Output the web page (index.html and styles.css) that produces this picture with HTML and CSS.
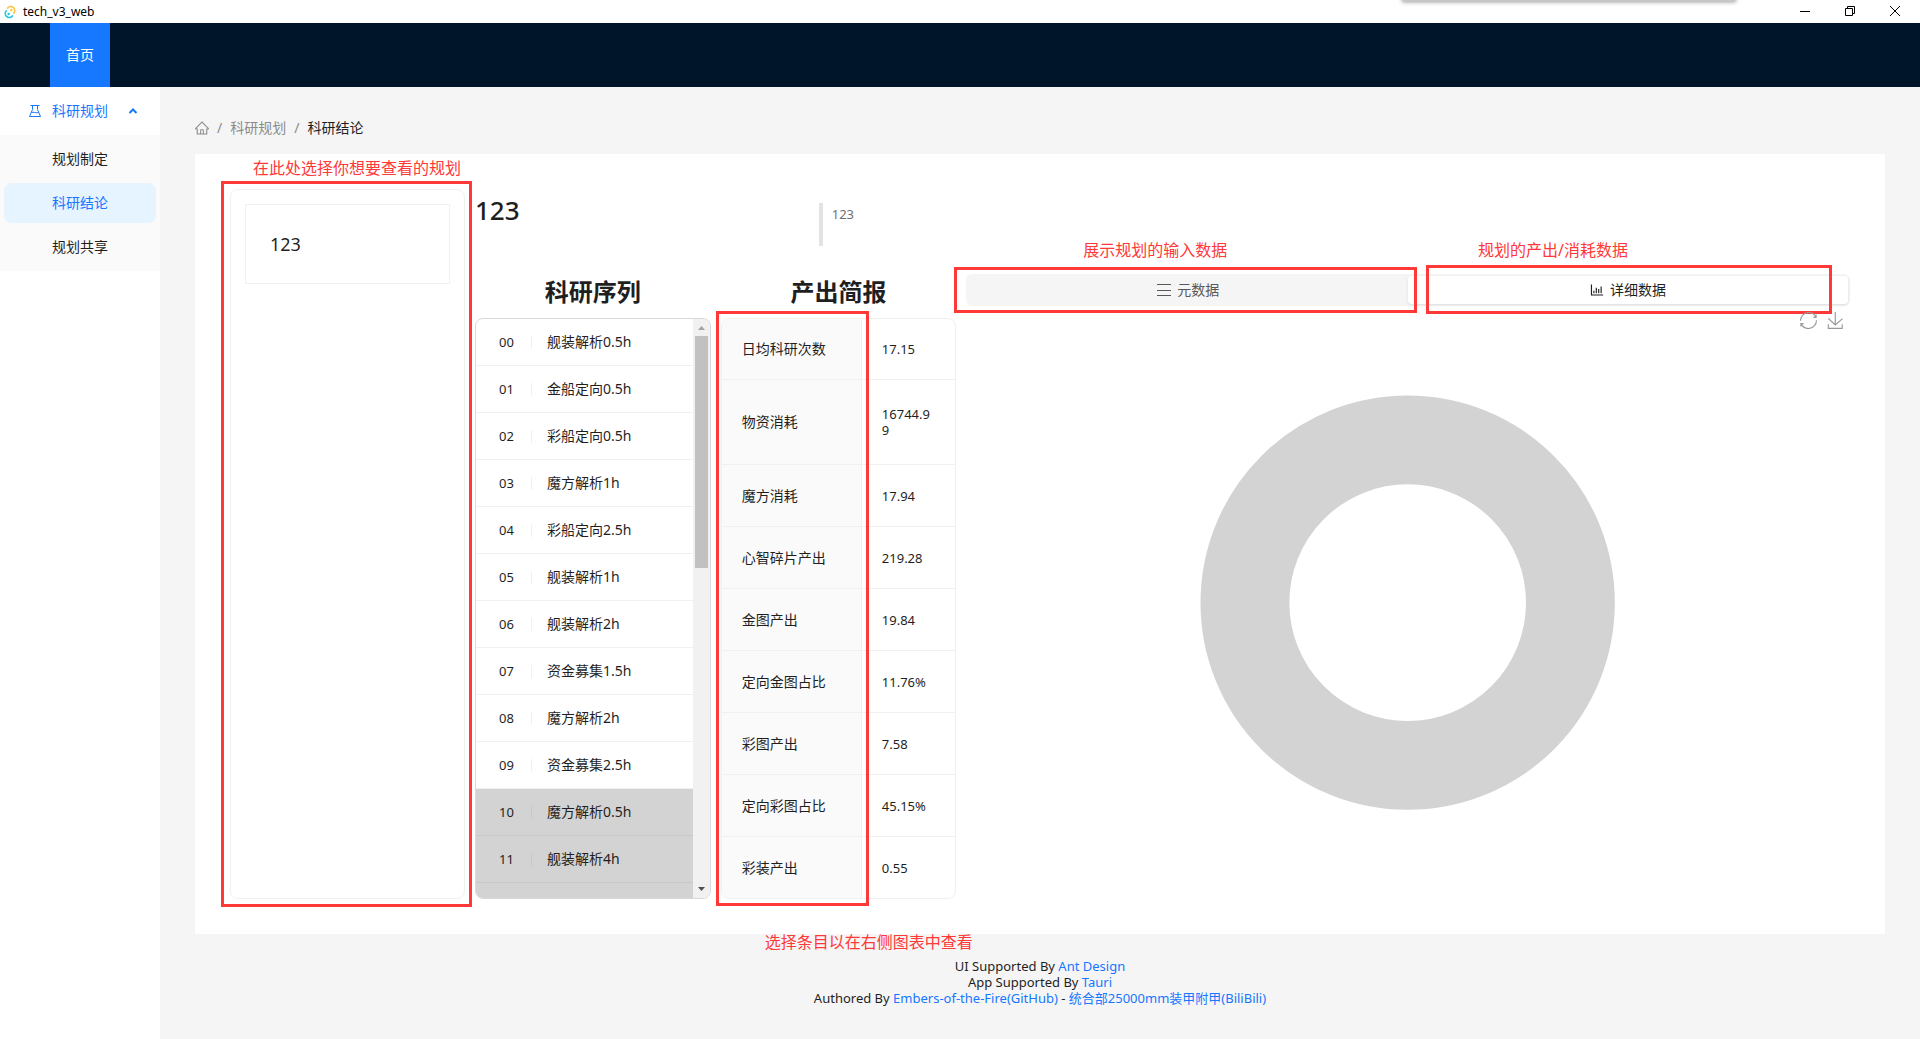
FILE: index.html
```html
<!DOCTYPE html>
<html lang="zh-CN">
<head>
<meta charset="utf-8">
<title>tech_v3_web</title>
<link rel="stylesheet" href="styles.css">
</head>
<body>
<div class="titlebar">
  <svg class="app-icon" viewBox="0 0 14 14" fill="none" stroke-width="1.600">
    <path d="M4.200 3.700A4 4 0 1 1 10.300 8.600" stroke="#fbc43c"/>
    <path d="M9.800 10.300A4 4 0 1 1 3.700 5.400" stroke="#24c8db"/>
    <circle cx="8.300" cy="5" r="1.200" fill="#fbc43c"/>
    <circle cx="5.700" cy="9" r="1.200" fill="#24c8db"/>
  </svg>
  <span class="app-name">tech_v3_web</span>
  <span class="tab-shadow"></span>
  <div class="window-buttons">
    <button type="button" aria-label="最小化"><svg viewBox="0 0 10 10"><path d="M0 5.500h10"/></svg></button>
    <button type="button" aria-label="还原"><svg viewBox="0 0 10 10"><path d="M.5 2.500h7v7h-7zM2.500 2.500v-2h7v7h-2"/></svg></button>
    <button type="button" aria-label="关闭"><svg viewBox="0 0 10 10"><path d="M0 0l10 10M10 0L0 10"/></svg></button>
  </div>
</div>
<header class="header"><a class="header-tab" href="#">首页</a></header>
<div class="layout">
  <nav class="sider">
    <a class="menu-title" href="#">
      <svg class="icon" viewBox="0 0 14 14" fill="none" stroke="currentColor"><path d="M2.500 1.500h9M4.500 1.500v4L1.500 12.500h11L9.500 5.500v-4M3.500 8.500c2-1 4 1 7 0"/></svg>
      <span>科研规划</span>
      <svg class="caret" viewBox="0 0 10 10" fill="none" stroke="currentColor" stroke-width="2"><path d="M1.500 7L5 3.500 8.500 7"/></svg>
    </a>
    <div class="submenu">
      <a href="#">规划制定</a>
      <a href="#" class="selected">科研结论</a>
      <a href="#">规划共享</a>
    </div>
  </nav>
  <div class="main">
    <div class="breadcrumb">
      <a href="#" aria-label="首页"><svg class="icon" viewBox="56 56 912 912" fill="currentColor"><path d="M946.500 505L560.100 118.800l-25.900-25.900a31.500 31.500 0 00-44.400 0L77.500 505a63.900 63.900 0 00-18.800 46c.4 35.200 29.700 63.300 64.900 63.300h42.500V940h691.800V614.300h43.400c17.100 0 33.200-6.700 45.300-18.800a63.600 63.600 0 0018.700-45.300c0-17-6.700-33.100-18.800-45.200zM568 868H456V664h112v204zm217.900-325.700V868H632V640c0-22.100-17.900-40-40-40H432c-22.100 0-40 17.900-40 40v228H238.100V542.300h-96l370-369.700 23.100 23.100L882 542.300h-96.100z"/></svg></a>
      <span>/</span><a href="#">科研规划</a><span>/</span><span class="current">科研结论</span>
    </div>
    <main class="content">
      <section class="plans">
        <button type="button" class="plan">123</button>
        <div class="mark mark-plans"></div>
        <p class="note note-plans">在此处选择你想要查看的规划</p>
      </section>
      <section class="detail">
        <div class="detail-head">
          <h2>123</h2>
          <blockquote>123</blockquote>
        </div>
        <div class="detail-body">
          <div class="column">
            <h3>科研序列</h3>
            <div class="sequence">
              <ul>
                <li><span>00</span><span>舰装解析0.5h</span></li>
                <li><span>01</span><span>金船定向0.5h</span></li>
                <li><span>02</span><span>彩船定向0.5h</span></li>
                <li><span>03</span><span>魔方解析1h</span></li>
                <li><span>04</span><span>彩船定向2.5h</span></li>
                <li><span>05</span><span>舰装解析1h</span></li>
                <li><span>06</span><span>舰装解析2h</span></li>
                <li><span>07</span><span>资金募集1.5h</span></li>
                <li><span>08</span><span>魔方解析2h</span></li>
                <li><span>09</span><span>资金募集2.5h</span></li>
                <li class="off"><span>10</span><span>魔方解析0.5h</span></li>
                <li class="off"><span>11</span><span>舰装解析4h</span></li>
                <li class="rest off"></li>
              </ul>
              <div class="scrollbar">
                <svg viewBox="0 0 9 5"><path d="M0 5L4.500 0 9 5z" fill="#a3a3a3"/></svg>
                <span class="thumb"></span>
                <svg viewBox="0 0 9 5"><path d="M0 0L4.500 5 9 0z" fill="#505050"/></svg>
              </div>
            </div>
          </div>
          <div class="column">
            <h3>产出简报</h3>
            <div class="report">
              <table>
                <tr><th scope="row">日均科研次数</th><td>17.15</td></tr>
                <tr class="tall"><th scope="row">物资消耗</th><td>16744.99</td></tr>
                <tr><th scope="row">魔方消耗</th><td>17.94</td></tr>
                <tr><th scope="row">心智碎片产出</th><td>219.28</td></tr>
                <tr><th scope="row">金图产出</th><td>19.84</td></tr>
                <tr><th scope="row">定向金图占比</th><td>11.76%</td></tr>
                <tr><th scope="row">彩图产出</th><td>7.58</td></tr>
                <tr><th scope="row">定向彩图占比</th><td>45.15%</td></tr>
                <tr><th scope="row">彩装产出</th><td>0.55</td></tr>
              </table>
              <div class="mark mark-report"></div>
              <p class="note note-report">选择条目以在右侧图表中查看</p>
            </div>
          </div>
          <div class="charts">
            <div class="segmented">
              <label><input type="radio" name="view"><svg class="icon" viewBox="0 0 14 14" fill="none" stroke="currentColor"><path d="M0 1.500h14M0 7.500h14M0 12.500h14"/></svg>元数据</label>
              <label><input type="radio" name="view" checked><svg class="icon" viewBox="72 72 880 880" fill="currentColor"><path d="M888 792H200V168c0-4.400-3.600-8-8-8h-56c-4.400 0-8 3.600-8 8v688c0 4.400 3.600 8 8 8h752c4.400 0 8-3.600 8-8v-56c0-4.400-3.600-8-8-8zm-600-80h56c4.400 0 8-3.600 8-8V560c0-4.400-3.600-8-8-8h-56c-4.400 0-8 3.600-8 8v144c0 4.400 3.600 8 8 8zm152 0h56c4.400 0 8-3.600 8-8V384c0-4.400-3.600-8-8-8h-56c-4.400 0-8 3.600-8 8v320c0 4.400 3.600 8 8 8zm152 0h56c4.400 0 8-3.600 8-8V462c0-4.400-3.600-8-8-8h-56c-4.400 0-8 3.600-8 8v242c0 4.400 3.600 8 8 8zm152 0h56c4.400 0 8-3.600 8-8V304c0-4.400-3.600-8-8-8h-56c-4.400 0-8 3.600-8 8v400c0 4.400 3.600 8 8 8z"/></svg>详细数据</label>
              <div class="mark mark-meta"></div>
              <p class="note note-meta">展示规划的输入数据</p>
              <div class="mark mark-data"></div>
              <p class="note note-data">规划的产出/消耗数据</p>
            </div>
            <div class="chart">
              <svg class="donut" viewBox="0 0 416 416"><circle cx="208" cy="208" r="163" fill="none" stroke="#d3d3d3" stroke-width="89"/></svg>
              <div class="toolbox">
                <button type="button" aria-label="还原"><svg viewBox="0 0 60 60"><path d="M47 18.900h9.800V8.700M56.300 20.100C52.100 9 40.500.6 26.800 2.100 12.600 3.700 1.600 16.200 2.100 30.600M13 41.100H3.100v10.200M3.700 39.900c4.200 11.100 15.800 19.500 29.500 18 14.200-1.600 25.200-14.100 24.700-28.500"/></svg></button>
                <button type="button" aria-label="保存为图片"><svg viewBox="0 0 60 60"><path d="M4.700 22.900l24.600 22.600 25.400-22.100M4.600 43.600V58h49.200V43.600M29.200 45.100V0"/></svg></button>
              </div>
            </div>
          </div>
        </div>
      </section>
    </main>
    <footer class="footer">
      <div>UI Supported By <a href="#">Ant Design</a></div>
      <div>App Supported By <a href="#">Tauri</a></div>
      <div>Authored By <a href="#">Embers-of-the-Fire(GitHub)</a> - <a href="#">统合部25000mm装甲附甲(BiliBili)</a></div>
    </footer>
  </div>
</div>
</body>
</html>
```
FILE: styles.css
```css
* { box-sizing: border-box; }
body {
  margin: 0;
  min-height: 100vh;
  display: flex;
  flex-direction: column;
  background: #f5f5f5;
  color: #1f1f1f;
  font: 14px/22px "Noto Sans", "Noto Sans CJK SC", sans-serif;
}
a { color: #1677ff; text-decoration: none; }
h2, h3, p, ul, blockquote { margin: 0; padding: 0; }
button { font: inherit; color: inherit; background: none; border: 0; padding: 0; }
svg { display: block; }
.icon { width: 14px; height: 14px; flex: none; }

.titlebar {
  position: relative;
  height: 23px;
  padding: 0 3px;
  display: flex;
  align-items: center;
  gap: 6px;
  background: #fff;
  color: #000;
  overflow: hidden;
}
.app-icon { width: 14px; height: 14px; }
.app-name { font-size: 12px; line-height: 20px; }
.tab-shadow {
  position: absolute;
  top: -4px;
  right: 185px;
  width: 332px;
  height: 5px;
  background: #c8c8c8;
  box-shadow: 0 0 4px 1px #999;
}
.window-buttons { margin-left: auto; display: flex; }
.window-buttons button { width: 45px; height: 22px; padding-bottom: 2px; display: grid; place-items: center; }
.window-buttons svg { width: 10px; height: 10px; fill: none; stroke: #000; }

.header { height: 64px; padding-left: 50px; display: flex; background: #001529; }
.header-tab { padding: 0 16px; line-height: 64px; color: #fff; background: #1677ff; }

.layout { flex: 1; display: flex; }
.sider { width: 160px; flex: none; background: #fff; }
.menu-title { display: flex; align-items: center; height: 48px; padding: 0 22px 0 28px; gap: 10px; }
.caret { width: 10px; height: 10px; margin-left: auto; }
.submenu { display: grid; gap: 4px; padding: 4px; background: #fafafa; }
.submenu a { padding-left: 48px; line-height: 40px; border-radius: 8px; color: #1f1f1f; }
.submenu .selected { background: #e6f4ff; color: #1677ff; }

.main { flex: 1; min-width: 0; padding: 0 35px; }
.breadcrumb { display: flex; align-items: center; gap: 8px; padding: 30px 0 15px; color: #8c8c8c; }
.breadcrumb a { color: #8c8c8c; }
.breadcrumb .current { color: #1f1f1f; }

.content {
  display: grid;
  grid-template-columns: 47fr 275fr;
  gap: 10px;
  padding: 35px;
  background: #fff;
}
.plans { position: relative; padding: 14px; border: 1px solid #f0f0f0; border-radius: 8px; }
.plan { width: 100%; padding: 24px; border: 1px solid #f0f0f0; font-size: 18px; line-height: 30px; text-align: left; }
.detail-head { display: grid; grid-template-columns: 1fr 3fr; }
h2 { font-size: 26px; font-weight: 500; line-height: 42px; }
blockquote {
  height: 43px;
  margin: 14px 0;
  padding-left: 9px;
  border-left: 4px solid #e3e3e3;
  font-size: 13px;
  color: #707070;
}
.detail-body { display: grid; grid-template-columns: 4fr 4fr 15fr; gap: 10px; }
.column { display: flex; flex-direction: column; }
h3 { padding: 16px 0 10px; font-size: 24px; line-height: 32px; text-align: center; }

.sequence {
  flex: 1;
  display: flex;
  border: 1px solid #d9d9d9;
  border-radius: 8px;
  overflow: hidden;
}
.sequence ul { flex: 1; display: flex; flex-direction: column; list-style: none; }
.sequence li { display: flex; align-items: center; height: 47px; padding-left: 23px; border-bottom: 1px solid #f0f0f0; }
.sequence li span:first-child { width: 33px; line-height: 13px; border-right: 1px solid #f0f0f0; font-size: 13px; }
.sequence li span + span { padding-left: 15px; }
.sequence li.off, .sequence li.off span:first-child { background: #d3d3d3; border-color: #c8c8c8; }
.sequence li.rest { flex: 1; height: auto; border: 0; }
.scrollbar { width: 17px; display: flex; flex-direction: column; align-items: center; padding: 7px 0; background: #f1f1f1; }
.scrollbar svg { width: 7px; height: 4px; }
.thumb { width: 13px; height: 41%; margin: 6px 0 auto; background: #c1c1c1; }

.report { position: relative; border: 1px solid #f0f0f0; border-radius: 8px; }
table { width: 100%; border-spacing: 0; table-layout: fixed; }
th, td { height: 62px; padding: 0 20px; border-bottom: 1px solid #f0f0f0; text-align: left; font-weight: 400; }
.tall th, .tall td { height: 85px; }
tr:first-child > *, tr:last-child > * { height: 61px; }
tr:last-child > * { border-bottom: 0; }
tr:first-child th { border-top-left-radius: 8px; }
tr:last-child th { border-bottom-left-radius: 8px; }
th { width: 60%; border-right: 1px solid #f0f0f0; background: #fafafa; }
td { font-size: 13px; line-height: 16px; word-break: break-all; }

.charts { padding-top: 14px; display: flex; flex-direction: column; }
.segmented { position: relative; display: grid; grid-template-columns: 1fr 1fr; padding: 2px; border-radius: 6px; background: #f5f5f5; }
.segmented label { display: flex; align-items: center; justify-content: center; gap: 6px; line-height: 28px; border-radius: 4px; color: #595959; }
.segmented label:has(:checked) { background: #fff; color: #1f1f1f; box-shadow: 0 1px 3px #0000001a; }
.segmented input { appearance: none; position: absolute; margin: 0; }
.chart { position: relative; flex: 1; display: grid; place-items: center; }
.donut { width: 47%; }
.toolbox { position: absolute; top: 6px; right: 6px; display: flex; gap: 10px; }
.toolbox svg { width: 17px; height: 17px; fill: none; stroke: #999; stroke-width: 4; }

.footer { padding: 24px 0; font-size: 13px; line-height: 16px; text-align: center; }

.mark { position: absolute; border: 3px solid #ff3838; pointer-events: none; }
.note { position: absolute; color: #ff3838; font-size: 16px; line-height: 24px; white-space: nowrap; }
.mark-plans { inset: -9px -8px -9px -10px; }
.note-plans { top: -34px; left: 22px; }
.mark-report { inset: -8px 86px -8px -6px; }
.note-report { top: calc(100% + 32px); left: 43px; }
.mark-meta { inset: -7px 49% -7px -12px; }
.note-meta { top: -36px; left: 117px; }
.mark-data { inset: -9px 18px -8px 52%; }
.note-data { top: -36px; right: 222px; }
```
